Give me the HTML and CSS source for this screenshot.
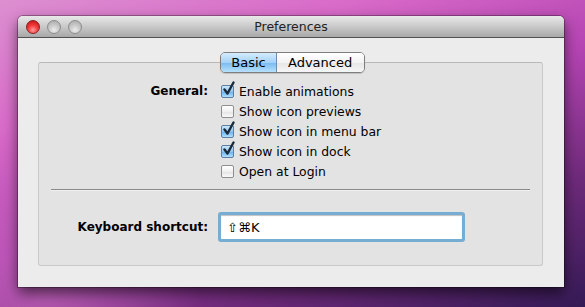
FILE: index.html
```html
<!DOCTYPE html>
<html>
<head>
<meta charset="utf-8">
<link rel="stylesheet" href="styles.css">
</head>
<body>
<div class="window">
  <div class="titlebar">
    <div class="lights">
      <span class="light red"></span>
      <span class="light gray"></span>
      <span class="light gray"></span>
    </div>
    <div class="title">Preferences</div>
  </div>
  <div class="content">
    <div class="panel">
      <div class="tabs">
        <span class="tab selected">Basic</span>
        <span class="tab">Advanced</span>
      </div>
      <div class="grid">
        <div class="label">General:</div>
        <div class="checks">
          <div class="check"><span class="box on"><svg viewBox="0 0 14 16" width="14" height="16"><path d="M2.5 8.5 L5.5 12.5 L11.5 1.5" fill="none" stroke="#1b2b3a" stroke-width="2.4" stroke-linejoin="round" stroke-linecap="round"/></svg></span>Enable animations</div>
          <div class="check"><span class="box"></span>Show icon previews</div>
          <div class="check"><span class="box on"><svg viewBox="0 0 14 16" width="14" height="16"><path d="M2.5 8.5 L5.5 12.5 L11.5 1.5" fill="none" stroke="#1b2b3a" stroke-width="2.4" stroke-linejoin="round" stroke-linecap="round"/></svg></span>Show icon in menu bar</div>
          <div class="check"><span class="box on"><svg viewBox="0 0 14 16" width="14" height="16"><path d="M2.5 8.5 L5.5 12.5 L11.5 1.5" fill="none" stroke="#1b2b3a" stroke-width="2.4" stroke-linejoin="round" stroke-linecap="round"/></svg></span>Show icon in dock</div>
          <div class="check"><span class="box"></span>Open at Login</div>
        </div>
      </div>
      <div class="sep"></div>
      <div class="grid kb">
        <div class="label">Keyboard shortcut:</div>
        <div class="field">⇧⌘K</div>
      </div>
    </div>
  </div>
</div>
</body>
</html>
```
FILE: styles.css
```css
html, body {
  margin: 0;
  padding: 0;
}
body {
  width: 585px;
  height: 307px;
  overflow: hidden;
  font-family: "DejaVu Sans", "Liberation Sans", sans-serif;
  font-size: 12px;
  color: #000;
  background:
    radial-gradient(circle at 8% 95%, rgba(200,110,190,0.6) 0, rgba(200,110,190,0) 25%),
    linear-gradient(160deg, #dc8fd0 0%, #d86ac8 25%, #b444b2 50%, #6e2a7a 75%, #341a55 100%);
  padding-top: 16px;
  padding-left: 18px;
  box-sizing: border-box;
}
.window {
  width: 546px;
  height: 271px;
  display: flex;
  flex-direction: column;
  border-radius: 5px 5px 0 0;
  box-shadow: 0 6px 14px rgba(0,0,0,0.6), 0 0 0 1px rgba(0,0,0,0.3);
  background: #ececec;
}
.titlebar {
  height: 21px;
  flex: none;
  display: flex;
  align-items: center;
  position: relative;
  border-radius: 5px 5px 0 0;
  background: linear-gradient(#e9e9e9, #c9c9c9 50%, #a8a8a8);
  border-bottom: 1px solid #515151;
}
.lights {
  display: flex;
  gap: 7px;
  padding-left: 8px;
}
.light {
  width: 14px;
  height: 14px;
  border-radius: 50%;
  box-sizing: border-box;
}
.light.red {
  background: radial-gradient(circle at 50% 75%, #ff9a9a 0, #f43a3a 45%, #b80d0d 100%);
  border: 1px solid #8a2020;
}
.light.gray {
  background: radial-gradient(circle at 50% 75%, #ececec 0, #c6c6c6 50%, #a5a5a5 100%);
  border: 1px solid #8c8c8c;
}
.title {
  position: absolute;
  left: 0;
  right: 0;
  top: 3px;
  text-align: center;
  font-size: 12.5px;
  color: #222;
}
.content {
  flex: 1;
  padding: 24px 21px 21px 20px;
  display: flex;
}
.panel {
  flex: 1;
  position: relative;
  background: #e3e3e3;
  border: 1px solid #c9c9c9;
  border-top-color: #b8b8b8;
  border-radius: 3px;
  padding: 18px 12px 0 12px;
}
.tabs {
  position: absolute;
  top: -11px;
  left: 181px;
  display: flex;
  height: 19px;
  border: 1px solid #7e7e7e;
  border-radius: 5px;
  overflow: hidden;
  box-shadow: 0 1px 1px rgba(0,0,0,0.15);
}
.tab {
  display: flex;
  align-items: center;
  padding: 0 12px 0 11px;
  font-size: 13px;
  background: linear-gradient(#ffffff, #f3f3f3 50%, #e6e6e6 51%, #f6f6f6);
}
.tab.selected {
  width: 55px;
  padding: 0;
  justify-content: center;
  border-right: 1px solid #6a8db0;
  background: linear-gradient(#d4ecfd, #a5d2f6 50%, #78baf0 51%, #b6e1fc);
}
.grid {
  display: grid;
  grid-template-columns: 157px 1fr;
  column-gap: 12px;
}
.label {
  text-align: right;
  font-weight: bold;
  line-height: 20px;
}
.checks {
  display: flex;
  flex-direction: column;
}
.check {
  height: 20px;
  display: flex;
  align-items: center;
  font-size: 12.4px;
}
.box {
  width: 13px;
  height: 13px;
  box-sizing: border-box;
  border: 1px solid #8f8f8f;
  border-radius: 2px;
  margin-right: 5px;
  margin-left: 1px;
  position: relative;
  background: linear-gradient(#ffffff, #f0f0f0 50%, #e2e2e2 51%, #fafafa);
}
.box.on {
  border-color: #5d7ea3;
  background: linear-gradient(#cde8fc, #8fc6f3 50%, #62aeed 51%, #b4e0fc);
}
.box svg {
  position: absolute;
  left: 0;
  top: -5px;
}
.sep {
  height: 0;
  border-top: 1px solid #8a8a8a;
  border-bottom: 1px solid #f0f0f0;
  margin-top: 8px;
}
.kb {
  margin-top: 21px;
  align-items: center;
}
.field {
  width: 247px;
  height: 30px;
  box-sizing: border-box;
  margin-left: -2px;
  border: 3px solid #76add2;
  border-radius: 3px;
  background: #fff;
  box-shadow: inset 0 1px 1px rgba(0,0,0,0.25);
  padding-left: 6px;
  display: flex;
  align-items: center;
  font-size: 13px;
}
```
